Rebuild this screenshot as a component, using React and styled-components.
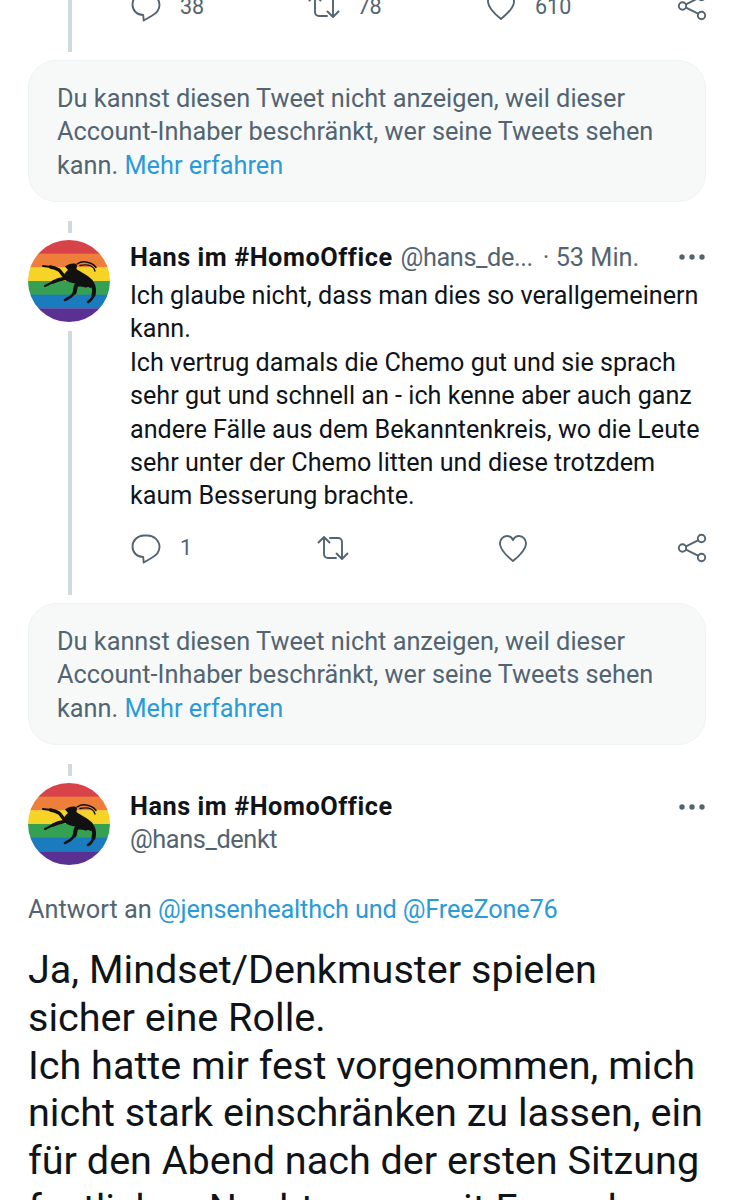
import React from 'react'
import styled, { createGlobalStyle } from 'styled-components'

const GlobalStyle = createGlobalStyle`
  html, body {
    margin: 0;
    padding: 0;
    background: #fff;
  }
  body {
    font-family: Roboto, "Liberation Sans", sans-serif;
  }
`

const Screen = styled.div`
  width: 734px;
  height: 1200px;
  overflow: hidden;
  padding: 0 28px;
  box-sizing: border-box;
`

const Tweet = styled.div`
  display: flex;
  gap: 20px;
`

const Rail = styled.div`
  width: 82px;
  flex: none;
  display: flex;
  flex-direction: column;
  align-items: center;
`

const ThreadLine = styled.div`
  width: 4px;
  background: #cfd9de;
  height: ${p => p.$h}px;
  margin: ${p => p.$top || 0}px 0 ${p => p.$bottom || 0}px 1px;
  flex: none;
`

const Avatar = styled.svg`
  width: 82px;
  height: 82px;
  flex: none;
  display: block;
`

const Body = styled.div`
  flex: 1;
  min-width: 0;
`

const TopStats = styled.div`
  display: flex;
  gap: 20px;
  height: 60px;
`

const TopActions = styled.div`
  flex: 1;
  margin-top: -10px;
`

const Header = styled.div`
  display: flex;
  align-items: center;
  height: 32px;
  margin-top: 39px;
  font-size: 25.300px;
  color: #536471;
  white-space: nowrap;
`

const Name = styled.span`
  font-weight: 700;
  letter-spacing: 0.55px;
  color: #0f1419;
  margin-right: 8px;
`

const ShortHandle = styled.span`
  letter-spacing: -0.400px;
`

const Time = styled.span`
  margin-left: 10px;
`

const Dots = styled.svg`
  width: 26px;
  height: 6px;
  margin-left: auto;
  margin-right: 1px;
  flex: none;
  fill: #536471;
`

const Text = styled.div`
  font-size: 25.170px;
  line-height: 33.400px;
  color: #0f1419;
  margin-top: 6px;
`

const Actions = styled.div`
  display: flex;
  align-items: center;
  height: 32px;
  margin-top: ${p => p.$top || 0}px;
`

const Action = styled.div`
  display: flex;
  align-items: center;
  gap: 18px;
  flex: none;
  width: ${p => p.$w}px;
  color: #536471;
  font-size: 21.500px;
  svg {
    width: 32px;
    height: 32px;
    flex: none;
    fill: none;
    stroke: #536471;
    stroke-width: 1.900;
    stroke-linecap: round;
    stroke-linejoin: round;
  }
`

const Notice = styled.div`
  background: #f7f9f9;
  border: 1px solid #eff3f4;
  border-radius: 28px;
  box-sizing: border-box;
  height: 142px;
  padding: 21px 28px;
  font-size: 25.300px;
  line-height: 33.400px;
  color: #536471;
`

const Link = styled.span`
  color: #2b9ad8;
`

const NoticeGap = styled.div`
  margin-top: 8px;
`

const MainHead = styled.div`
  display: flex;
  gap: 20px;
  height: 82px;
`

const MainNames = styled.div`
  flex: 1;
  display: flex;
  flex-direction: column;
  font-size: 25.300px;
  line-height: 33px;
  padding-top: 7px;
`

const MainName = styled.div`
  display: flex;
  align-items: center;
  font-weight: 700;
  letter-spacing: 0.55px;
  color: #0f1419;
`

const Handle = styled.div`
  color: #536471;
  letter-spacing: -0.400px;
`

const ReplyTo = styled.div`
  margin-top: 28px;
  font-size: 25.300px;
  line-height: 33px;
  color: #536471;
`

const ReplyLink = styled(Link)`
  letter-spacing: -0.160px;
`

const BigText = styled.div`
  margin-top: 20px;
  font-size: 39.600px;
  line-height: 47.750px;
  color: #0f1419;
  white-space: nowrap;
`

const Reply = () => (
  <svg viewBox="0 0 32 32">
    <path d="M14 3.500h3.500C24 3.500 29.500 8.600 29.500 15c0 5-3.500 8.500-8 11l-7.800 4.500-.5-5.500C7 25 2.500 20.500 2.500 14.500 2.500 8.500 7.500 3.500 14 3.500z" />
  </svg>
)

const Retweet = () => (
  <svg viewBox="0 0 32 32">
    <path d="M1.500 10.500 7 5l5.500 5.500M7 5.500V22c0 2.200 1.600 4 4 4h8M30.500 21.500 25 27l-5.500-5.500M25 26.500V10c0-2.200-1.600-4-4-4h-8" />
  </svg>
)

const Heart = () => (
  <svg viewBox="0 0 32 32">
    <path d="M16 29C11 25 3.500 19 3 12c-.3-4.500 3-8 7-8 2.800 0 4.800 1.500 6 4 1.200-2.500 3.200-4 6-4 4 0 7.300 3.500 7 8-.5 7-8 13-13 17z" />
  </svg>
)

const Share = () => (
  <svg viewBox="0 0 32 32">
    <circle cx="25.500" cy="6.500" r="3.700" />
    <circle cx="25.500" cy="25.500" r="3.700" />
    <circle cx="6.500" cy="16" r="3.700" />
    <path d="M10 14.300 22 8.300M10 17.700l12 6" />
  </svg>
)

const stripes = ['#d8434a', '#ee7f3b', '#f5d327', '#35a052', '#1a7bbf', '#5a3192']

// the ibex from the Graubuenden flag, drawn roughly
const Ibex = () => (
  <g>
    <path fill="#111" d="M37 26.500c2-2 6-3.500 10-3l2 1.500-.5 4c4 3 11 6 16 11 2 3 1.500 7-2 8-5-3-12-3.500-18-5-4-1-8-2.500-9.500-5.500 0-3 3-5.500 5-7.500z" />
    <g fill="none" stroke="#111" strokeLinecap="round" strokeLinejoin="round">
      <path strokeWidth="1.500" d="M49 24c3-2 6-2.500 9-2 4 .5 8 2.500 10 5.500" />
      <path strokeWidth="1.300" d="M52 25.500c4-1 8-1 11 .5 2 1 3.500 3 4 5" />
      <path strokeWidth="3.400" d="M37 37c-3-2-3.500-5-6-7-2.500-1.500-5-2.500-8.500-3" />
      <path strokeWidth="2" d="M23 27 15 26" />
      <path strokeWidth="3.400" d="M37 38.500c-4 .5-8 1.500-12 3.500" />
      <path strokeWidth="2" d="M25 42l-8 4" />
      <path strokeWidth="4" d="M58 45.500c-3-1-7-1.500-9.500-.5-1.500 2-1 5-2 7.500" />
      <path strokeWidth="2.600" d="M46.500 52.500c-2 3-5 5.500-9.500 7.500" />
      <path strokeWidth="4" d="M64.500 44c1.500 3 2 7 1 11" />
      <path strokeWidth="2.600" d="M65.500 55c-1 3-2.500 5.500-5.500 7" />
    </g>
  </g>
)

const Pride = ({ id }) => (
  <Avatar viewBox="0 0 82 82">
    <defs>
      <clipPath id={id}>
        <circle cx="41" cy="41" r="41" />
      </clipPath>
    </defs>
    <g clipPath={`url(#${id})`}>
      {stripes.map((c, i) => (
        <rect key={c} x="0" y={i * 13.67} width="82" height="14" fill={c} />
      ))}
    </g>
    <Ibex />
  </Avatar>
)

const Ellipsis = () => (
  <Dots viewBox="0 0 26 6">
    <circle cx="3" cy="3" r="2.700" />
    <circle cx="13" cy="3" r="2.700" />
    <circle cx="23" cy="3" r="2.700" />
  </Dots>
)

const RestrictedNotice = () => (
  <Notice>
    Du kannst diesen Tweet nicht anzeigen, weil dieser Account-Inhaber beschränkt, wer seine Tweets sehen kann. <Link>Mehr erfahren</Link>
  </Notice>
)

const ActionRow = ({ reply, retweet, like, widths }) => (
  <>
    <Action $w={widths[0]}><Reply />{reply}</Action>
    <Action $w={widths[1]}><Retweet />{retweet}</Action>
    <Action $w={widths[2]}><Heart />{like}</Action>
    <Action $w={32}><Share /></Action>
  </>
)

export default function App() {
  return (
    <Screen>
      <GlobalStyle />
      <TopStats>
        <Rail><ThreadLine $h={52} /></Rail>
        <TopActions>
          <Actions>
            <ActionRow reply="38" retweet="78" like="610" widths={[177.500, 177.500, 191]} />
          </Actions>
        </TopActions>
      </TopStats>

      <RestrictedNotice />

      <Tweet>
        <Rail>
          <ThreadLine $h={12} $top={19} $bottom={7} />
          <Pride id="av1" />
          <ThreadLine $h={264} $top={9} />
        </Rail>
        <Body>
          <Header>
            <Name>Hans im #HomoOffice</Name>
            <ShortHandle>@hans_de...</ShortHandle>
            <Time>· 53 Min.</Time>
            <Ellipsis />
          </Header>
          <Text>
            Ich glaube nicht, dass man dies so verallgemeinern kann.<br />
            Ich vertrug damals die Chemo gut und sie sprach sehr gut und schnell an - ich kenne aber auch ganz andere Fälle aus dem Bekanntenkreis, wo die Leute sehr unter der Chemo litten und diese trotzdem kaum Besserung brachte.
          </Text>
          <Actions $top={19}>
            <ActionRow reply="1" widths={[186.500, 180, 179.500]} />
          </Actions>
        </Body>
      </Tweet>

      <NoticeGap>
        <RestrictedNotice />
      </NoticeGap>

      <Rail>
        <ThreadLine $h={12} $top={19} $bottom={7} />
      </Rail>
      <MainHead>
        <Pride id="av2" />
        <MainNames>
          <MainName>Hans im #HomoOffice<Ellipsis /></MainName>
          <Handle>@hans_denkt</Handle>
        </MainNames>
      </MainHead>

      <ReplyTo>Antwort an <ReplyLink>@jensenhealthch und @FreeZone76</ReplyLink></ReplyTo>
      <BigText>
        Ja, Mindset/Denkmuster spielen<br />
        sicher eine Rolle.<br />
        Ich hatte mir fest vorgenommen, mich<br />
        nicht stark einschränken zu lassen, ein<br />
        für den Abend nach der ersten Sitzung<br />
        festliches Nachtessen mit Freunden
      </BigText>
    </Screen>
  )
}
